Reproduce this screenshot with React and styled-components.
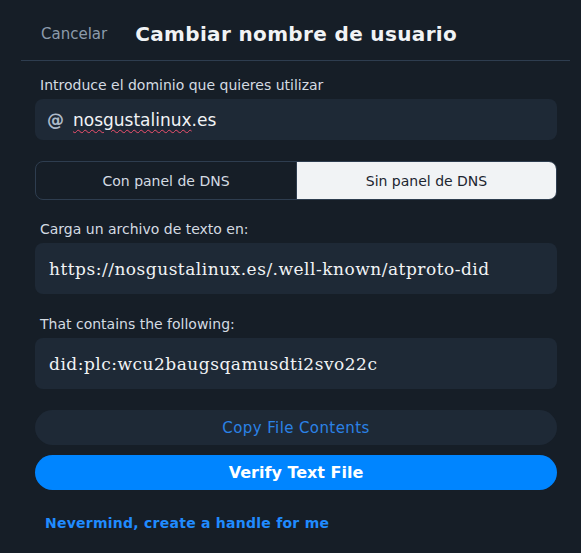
import React from 'react';
import styled, { createGlobalStyle } from 'styled-components';

const GlobalStyle = createGlobalStyle`
    html, body {
        margin: 0;
        padding: 0;
        background: #161e27;
        font-family: "DejaVu Sans", "Noto Sans", sans-serif;
    }
`;

const Screen = styled.div`
    width: 581px;
    height: 553px;
    overflow: hidden;
    background: #161e27;
`;

const Sheet = styled.div`
    margin: 0 11px 0 21px;
`;

const Header = styled.div`
    display: flex;
    align-items: center;
    height: 61px;
    padding: 7px 20px 0;
    border-bottom: 1px solid #2e3d4f;
    box-sizing: border-box;
`;

const CancelLink = styled.span`
    font-size: 15px;
    color: #8c9bab;
    margin-right: 28px;
`;

const Title = styled.h1`
    margin: 0;
    font-size: 20px;
    font-weight: bold;
    letter-spacing: 0.35px;
    color: #f1f3f5;
`;

const Body = styled.div`
    display: flex;
    flex-direction: column;
    padding: 0 13px 0 14px;
`;

const Label = styled.div`
    font-size: 14px;
    line-height: 20px;
    color: #d4dbe2;
    padding-left: 5px;
    margin-top: ${props => props.top || "20px"};
    margin-bottom: 4px;
`;

const InputBox = styled.div`
    display: flex;
    align-items: center;
    gap: 9px;
    height: 41px;
    padding: 0 12px;
    border-radius: 8px;
    background: #1e2936;
`;

const At = styled.span`
    font-size: 17px;
    font-weight: bold;
    color: #aebbc9;
`;

const InputText = styled.span`
    font-size: 17px;
    color: #f1f3f5;
`;

const Misspelled = styled.span`
    text-decoration: underline wavy #f0506e;
    text-decoration-thickness: 1px;
    text-underline-offset: 3px;
`;

const Segmented = styled.div`
    display: grid;
    grid-template-columns: 1fr 1fr;
    height: 39px;
    margin-top: 21px;
    border: 1px solid #2e3d4f;
    border-radius: 8px;
    overflow: hidden;
    box-sizing: border-box;
`;

const Segment = styled.div`
    display: flex;
    align-items: center;
    justify-content: center;
    font-size: 14px;
    color: ${props => props.active ? "#1c2530" : "#d4dbe2"};
    background: ${props => props.active ? "#f1f3f5" : "transparent"};
    border-left: ${props => props.active ? "1px solid #2e3d4f" : "none"};
`;

const CodeBox = styled.div`
    display: flex;
    align-items: center;
    height: 51px;
    padding: 0 14px;
    border-radius: 8px;
    background: #1e2936;
    font-family: "DejaVu Serif", "Liberation Serif", serif;
    font-size: 17px;
    letter-spacing: 0.5px;
    color: #f1f3f5;
`;

const PillButton = styled.button`
    display: flex;
    align-items: center;
    justify-content: center;
    height: 35px;
    margin-top: ${props => props.top};
    border: none;
    border-radius: 18px;
    font-family: "DejaVu Sans", sans-serif;
    font-size: ${props => props.primary ? "16px" : "15px"};
    font-weight: ${props => props.primary ? "bold" : "normal"};
    letter-spacing: ${props => props.primary ? "0" : "0.4px"};
    color: ${props => props.primary ? "#ffffff" : "#2b82e6"};
    background: ${props => props.primary ? "#0085ff" : "#1e2936"};
    cursor: pointer;
`;

const TextLink = styled.div`
    margin-top: 23px;
    padding-left: 10px;
    font-size: 14px;
    line-height: 20px;
    font-weight: bold;
    letter-spacing: 0.25px;
    color: #208bfe;
`;

export default function App() {
    return (
        <Screen>
            <GlobalStyle />
            <Sheet>
                <Header>
                    <CancelLink>Cancelar</CancelLink>
                    <Title>Cambiar nombre de usuario</Title>
                </Header>
                <Body>
                    <Label top="14px">Introduce el dominio que quieres utilizar</Label>
                    <InputBox>
                        <At>@</At>
                        <InputText><Misspelled>nosgustalinux</Misspelled>.es</InputText>
                    </InputBox>

                    <Segmented>
                        <Segment>Con panel de DNS</Segment>
                        <Segment active>Sin panel de DNS</Segment>
                    </Segmented>

                    <Label top="19px">Carga un archivo de texto en:</Label>
                    <CodeBox>https://nosgustalinux.es/.well-known/atproto-did</CodeBox>

                    <Label>That contains the following:</Label>
                    <CodeBox>did:plc:wcu2baugsqamusdti2svo22c</CodeBox>

                    <PillButton top="21px">Copy File Contents</PillButton>
                    <PillButton top="10px" primary>Verify Text File</PillButton>

                    <TextLink>Nevermind, create a handle for me</TextLink>
                </Body>
            </Sheet>
        </Screen>
    );
}
